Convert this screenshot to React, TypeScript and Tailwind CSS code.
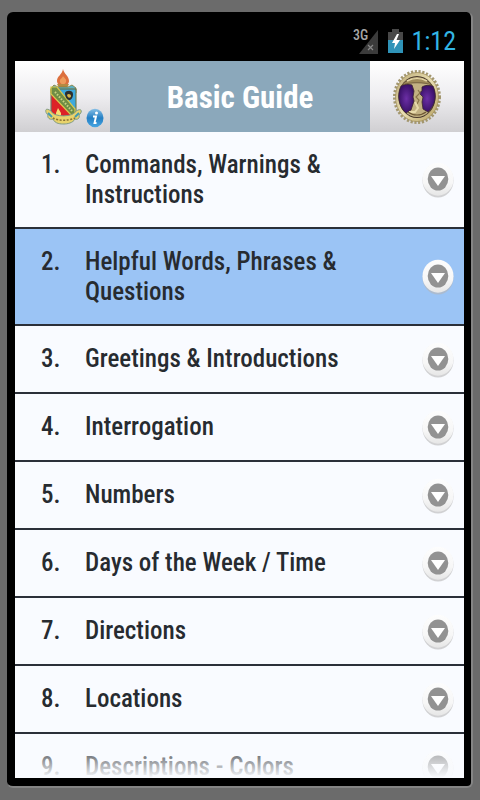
import { useState } from 'react'

const topics = [
  'Commands, Warnings & Instructions',
  'Helpful Words, Phrases & Questions',
  'Greetings & Introductions',
  'Interrogation',
  'Numbers',
  'Days of the Week / Time',
  'Directions',
  'Locations',
  'Descriptions - Colors',
]

function StatusBar() {
  return (
    <div className="flex h-[49px] shrink-0 items-center justify-end pt-2 pr-2">
      <svg width="27" height="28" viewBox="0 0 27 28" role="img" aria-label="3G signal">
        <path d="M26 3V27H7z" fill="#3b3b3b" />
        <path d="M16 18l5 5M21 18l-5 5" stroke="#8a8a8a" strokeWidth="1.2" />
        <text x="1" y="13" fontSize="14" fontWeight="500" fill="#a5a5a5">3G</text>
      </svg>
      <svg className="ml-[9px]" width="15" height="26" viewBox="0 0 15 26" role="img" aria-label="Battery charging">
        <path d="M4 1h7v3h4v9H0V4h4z" fill="#484848" />
        <path d="M0 12h15v13H0z" fill="#2f93b8" />
        <path d="M9 6L4 15h3L6 21l6-9H8.500L11 6z" fill="#fff" />
      </svg>
      <span className="ml-2 text-[26px] leading-8 text-[#33b5e5]">1:12</span>
    </div>
  )
}

function Crest() {
  return (
    <svg width="37" height="58" viewBox="0 0 37 58" aria-hidden="true">
      <path d="M18 0c1 5 6 7 6 12 0 3-3 5-6 5s-6-2-6-5c0-5 5-6 6-12z" fill="#dc6f3d" />
      <path d="M18 7c1 2 4 3 3 6-1 3-5 3-6 0-1-3 2-3 3-6z" fill="#ee9c5c" />
      <path d="M12 15h12l-2 4h-8z" fill="#b58a42" />
      <path d="M6 19l3-3 4 2h10l4-2 4 3v5H6z" fill="#5bb0c4" stroke="#8a7a35" strokeWidth=".8" />
      <path d="M6 20h25v22c0 5-6 7-12 10-7-3-13-5-13-10z" fill="#3ea9dc" stroke="#6b6a35" />
      <path d="M6.500 24v18c0 4 6 6 12 9 4-2 8-4 10-6z" fill="#dc2227" />
      <path d="M6 18h6l18 22v5l-3 2L6 25z" fill="#6f8d45" stroke="#dac84b" strokeWidth="1.2" />
      <path d="M10 23l18 20" stroke="#c9d380" strokeWidth="2" strokeDasharray="1.500 1.500" />
      <path d="M20 24c1-3 8-3 8 1 0 4-2 6-4 6s-4-3-4-7z" fill="#2b3030" />
      <path d="M22 26c1-2 4-1 4 1s-3 3-4-1z" fill="#d8b44b" />
      <path d="M11 44l2-5 3 5v3h-5z" fill="#f6dd74" />
      <path d="M6 42c-7-5-6 2-3 4-1 3 2 5 5 4 2 5 8 5 11 5s9-1 11-5c3 1 5-1 4-4 3-2 4-8-3-4-2 6-22 7-25 0z" fill="#e9d36b" stroke="#7f9b84" />
      <path d="M3 44l4 4M34 44l-4 4" stroke="#4299b0" strokeWidth="2" />
      <path d="M8 49c5 3 16 3 22 0" fill="none" stroke="#8a7034" strokeWidth="1.500" strokeDasharray="2 1.500" />
    </svg>
  )
}

function InfoIcon() {
  return (
    <svg width="18" height="20" viewBox="0 0 18 20" aria-hidden="true">
      <defs>
        <linearGradient id="info" x1="0" y1="0" x2="0" y2="1">
          <stop offset="0" stopColor="#86bfe6" />
          <stop offset=".5" stopColor="#247fc4" />
          <stop offset="1" stopColor="#46a5e2" />
        </linearGradient>
      </defs>
      <ellipse cx="9" cy="10" rx="8.500" ry="9.200" fill="url(#info)" />
      <circle cx="10.500" cy="5" r="1.500" fill="#fff" />
      <path d="M7 8.500h3L8.500 15h2" fill="none" stroke="#fff" strokeWidth="1.900" />
    </svg>
  )
}

function Medal() {
  return (
    <svg width="50" height="56" viewBox="0 0 50 56" aria-hidden="true">
      <defs>
        <linearGradient id="gold" x1="0" y1="0" x2="1" y2="1">
          <stop offset="0" stopColor="#b9a873" />
          <stop offset=".5" stopColor="#eadfb2" />
          <stop offset="1" stopColor="#b39d5d" />
        </linearGradient>
        <radialGradient id="purple">
          <stop offset="0" stopColor="#6c2fa6" />
          <stop offset="1" stopColor="#3a1168" />
        </radialGradient>
      </defs>
      <ellipse cx="25" cy="28" rx="22.500" ry="25.500" fill="none" stroke="#a3976f" strokeWidth="3" strokeDasharray="2.200 1.600" />
      <ellipse cx="25" cy="28" rx="21.500" ry="24.500" fill="url(#gold)" stroke="#9c8a56" strokeWidth=".7" />
      <ellipse cx="25" cy="28" rx="18.500" ry="21" fill="#4a3a2c" />
      <ellipse cx="25" cy="28" rx="17.500" ry="20" fill="#c2b182" />
      <path d="M9 17c3-2 8-2 11-1l2 6-1 6 1 4-3 9-5 3C6 37 5 25 9 17z" fill="url(#purple)" stroke="#3b2530" strokeWidth=".8" />
      <path d="M30 18c3-2 7-2 11-1 4 8 3 19-5 26l-5-3-1-7 1-5-4-4 3-2z" fill="url(#purple)" stroke="#3b2530" strokeWidth=".8" />
      <path d="M10 16c5-8 24-8 30 0-8-3-22-3-30 0z" fill="#a08c5a" stroke="#655233" strokeWidth=".8" />
      <path d="M15 12c6-3 14-3 20 0" fill="none" stroke="#e5d7a5" strokeWidth="1.500" />
      <path d="M26 21l2 3-4 4 3 3-2 4" fill="none" stroke="#8a7549" strokeWidth="1.200" />
      <path d="M23 33l3 6-3 4-6 0" fill="none" stroke="#e7daab" strokeWidth="2" />
      <path d="M16 43c5 4 13 4 18 0" fill="none" stroke="#6d5833" strokeWidth="1.200" />
    </svg>
  )
}

function ExpandIcon() {
  return (
    <svg width="32" height="36" viewBox="0 0 32 36" aria-hidden="true">
      <defs>
        <linearGradient id="rim" x1="0" y1="0" x2="0" y2="1">
          <stop offset="0" stopColor="#fdfdfd" />
          <stop offset=".6" stopColor="#f7f7f7" />
          <stop offset="1" stopColor="#e6e6e6" />
        </linearGradient>
      </defs>
      <ellipse cx="16" cy="18.500" rx="15.500" ry="17" fill="#b5b5b5" opacity=".6" />
      <ellipse cx="16" cy="17.200" rx="15.500" ry="16.500" fill="url(#rim)" />
      <ellipse cx="16" cy="17" rx="10.300" ry="11.500" fill="#929292" />
      <path d="M9 14h14L16 24z" fill="#fff" />
    </svg>
  )
}

export default function App() {
  const [selected, setSelected] = useState(1)

  return (
    <div className="flex h-screen bg-[#6b6b6b] px-[7px] py-3 font-['Roboto_Condensed','Liberation_Sans_Narrow',sans-serif]">
      <div className="flex min-w-0 flex-1 flex-col rounded-md border-r-2 border-b-2 border-[#858585] bg-black pr-[7px] pb-2 pl-2">
        <StatusBar />

        <header className="flex h-[71px] shrink-0">
          <button
            aria-label="About"
            className="flex w-[95px] items-center justify-end gap-1 bg-linear-to-b from-white via-[#eeedf0] to-[#d0cfd2] pt-[2px] pr-[6px]"
          >
            <Crest />
            <span className="self-end pb-1">
              <InfoIcon />
            </span>
          </button>
          <h1 className="flex flex-1 items-center justify-center bg-[#8ba8bb] pt-1 text-[31px] font-bold text-white">
            Basic Guide
          </h1>
          <button
            aria-label="Home"
            className="flex w-[94px] items-center justify-center bg-linear-to-b from-white via-[#eeedf0] to-[#d0cfd2]"
          >
            <Medal />
          </button>
        </header>

        <main className="relative min-h-0 flex-1 overflow-hidden bg-[#f9fbff]">
          <ol>
            {topics.map((topic, index) => (
              <li key={topic}>
                <button
                  onClick={() => setSelected(index)}
                  className={`flex min-h-[68px] w-full items-start border-b-2 border-[#2b3039] pt-[18px] pr-[10px] pb-[17px] pl-[26px] text-left text-[25px] leading-[30px] font-medium text-[#272b30] ${
                    selected === index ? 'bg-[#9bc4f5]' : 'bg-[#f9fbff]'
                  }`}
                >
                  <span className="w-[44px] shrink-0">{index + 1}.</span>
                  <span className="max-w-[280px] flex-1">{topic}</span>
                  <span className="-my-4 ml-auto shrink-0 self-center">
                    <ExpandIcon />
                  </span>
                </button>
              </li>
            ))}
          </ol>
          {/* fade at the bottom edge of the list */}
          <div className="pointer-events-none absolute inset-x-0 bottom-0 h-9 bg-linear-to-b from-[#f9fbff]/0 to-[#f9fbff]" />
        </main>
      </div>
    </div>
  )
}
